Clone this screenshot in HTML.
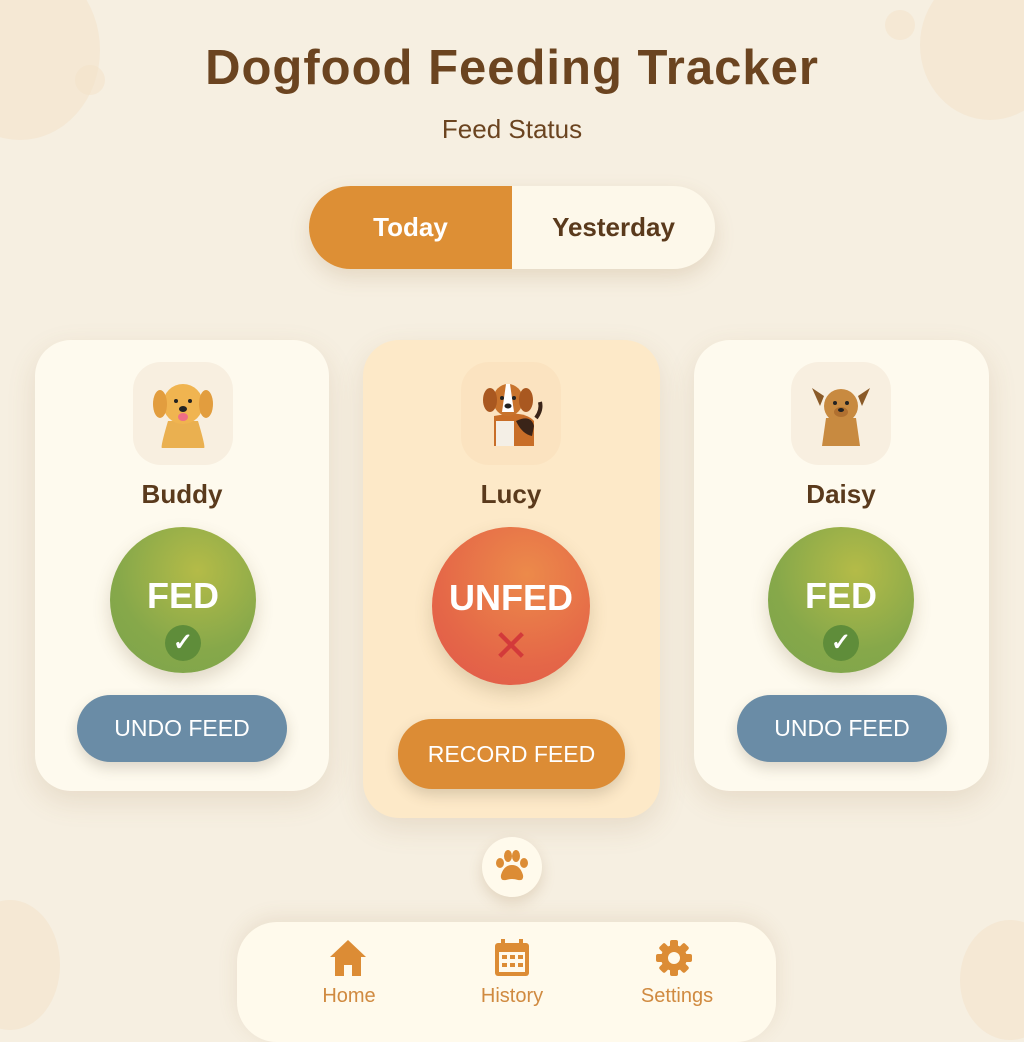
<!DOCTYPE html><html><head><style>
body{margin:0;width:1024px;height:1024px;overflow:hidden;background:#f6efe1;font-family:"Liberation Sans",sans-serif;position:relative}
.a{position:absolute}
.blob{position:absolute;border-radius:50%;background:#f3e2c8;opacity:.5}
h1{position:absolute;top:40px;left:0;width:1024px;text-align:center;margin:0;font-size:49px;font-weight:bold;color:#6b4420;letter-spacing:1px}
.sub{top:114px;left:0;width:1024px;text-align:center;font-size:26px;color:#6b4420}
.tog{left:309px;top:186px;width:406px;height:83px;border-radius:42px;overflow:hidden;background:#fdf8ea;box-shadow:0 8px 20px rgba(150,110,60,.18)}
.tog div{position:absolute;top:0;height:83px;line-height:83px;text-align:center;font-size:26px;font-weight:bold}
.card{border-radius:36px;background:#fefaee;box-shadow:0 10px 28px rgba(150,110,60,.15)}
.av{width:100px;height:103px;border-radius:28px;background:#f8efe0}
.name{font-size:26px;font-weight:bold;color:#5a3a1c;text-align:center;width:294px}
.circ{border-radius:50%;color:#fff;font-weight:bold;text-align:center;box-shadow:0 8px 18px rgba(100,80,40,.2)}
.btn{border-radius:34px;color:#fff;font-size:23px;text-align:center;box-shadow:0 6px 14px rgba(80,70,50,.2)}
.lab{font-size:20px;color:#d08a40;text-align:center;width:120px}
</style></head><body>
<div class="blob" style="left:-60px;top:-40px;width:160px;height:180px"></div>
<div class="blob" style="left:75px;top:65px;width:30px;height:30px"></div>
<div class="blob" style="left:920px;top:-30px;width:140px;height:150px"></div>
<div class="blob" style="left:885px;top:10px;width:30px;height:30px"></div>
<div class="blob" style="left:-40px;top:900px;width:100px;height:130px"></div>
<div class="blob" style="left:960px;top:920px;width:100px;height:120px"></div>
<h1>Dogfood Feeding Tracker</h1>
<div class="a sub">Feed Status</div>
<div class="a tog"><div style="left:0;width:203px;background:#dd8f35;color:#fff">Today</div><div style="left:203px;width:203px;color:#5a3a1c">Yesterday</div></div>

<div class="a card" style="left:35px;top:340px;width:294px;height:451px"></div>
<div class="a card" style="left:363px;top:340px;width:297px;height:478px;background:#fde9c8"></div>
<div class="a card" style="left:694px;top:340px;width:295px;height:451px"></div>

<div class="a av" style="left:133px;top:362px"></div>
<div class="a av" style="left:461px;top:362px;background:#fbe3c0"></div>
<div class="a av" style="left:791px;top:362px"></div>
<svg class="a" style="left:148px;top:376px" width="70" height="72" viewBox="0 0 70 72"><path d="M20 45 Q12 72 14 72 H56 Q58 72 50 45Z" fill="#eab050"/><ellipse cx="35" cy="28" rx="20" ry="20" fill="#f0b450"/><ellipse cx="12" cy="28" rx="7" ry="14" fill="#e29d3e"/><ellipse cx="58" cy="28" rx="7" ry="14" fill="#e29d3e"/><circle cx="28" cy="25" r="2" fill="#222"/><circle cx="42" cy="25" r="2" fill="#222"/><ellipse cx="35" cy="33" rx="4" ry="3" fill="#222"/><ellipse cx="35" cy="41" rx="5" ry="4" fill="#ef6f85"/></svg>
<svg class="a" style="left:476px;top:376px" width="72" height="72" viewBox="0 0 72 72"><path d="M18 40 L18 70 H58 L58 45 Q50 36 30 38Z" fill="#c86e28"/><path d="M40 45 Q55 38 58 50 L56 60 Q46 58 40 45Z" fill="#3a2418"/><path d="M20 45 L20 70 H38 L38 45Z" fill="#f4efe6"/><ellipse cx="32" cy="24" rx="15" ry="16" fill="#c8732c"/><ellipse cx="14" cy="24" rx="7" ry="12" fill="#a95820"/><ellipse cx="50" cy="24" rx="7" ry="12" fill="#a95820"/><path d="M30 8 L34 8 L38 36 L26 36Z" fill="#fff"/><circle cx="26" cy="22" r="2" fill="#222"/><circle cx="38" cy="22" r="2" fill="#222"/><ellipse cx="32" cy="30" rx="3.5" ry="2.5" fill="#222"/><path d="M60 42 Q66 34 64 26" stroke="#3a2418" stroke-width="4" fill="none"/></svg>
<svg class="a" style="left:806px;top:376px" width="70" height="72" viewBox="0 0 70 72"><path d="M20 42 L16 70 H54 L50 42Z" fill="#c88a40"/><ellipse cx="35" cy="30" rx="17" ry="17" fill="#c88a40"/><path d="M18 20 L6 12 L14 30Z" fill="#8a5a28"/><path d="M52 20 L64 12 L56 30Z" fill="#8a5a28"/><circle cx="29" cy="27" r="2" fill="#222"/><circle cx="41" cy="27" r="2" fill="#222"/><ellipse cx="35" cy="36" rx="7" ry="5" fill="#b07030"/><ellipse cx="35" cy="34" rx="3" ry="2" fill="#222"/></svg>

<div class="a name" style="left:35px;top:479px">Buddy</div>
<div class="a name" style="left:364px;top:479px">Lucy</div>
<div class="a name" style="left:694px;top:479px">Daisy</div>

<div class="a circ" style="left:110px;top:527px;width:146px;height:146px;background:radial-gradient(circle at 60% 30%,#b4bb48,#86a84a 60%,#7ca44c)"><div style="margin-top:48px;font-size:36px">FED</div><div style="margin:8px auto 0;width:36px;height:36px;border-radius:50%;background:#5f8d3a;line-height:36px;font-size:24px">✓</div></div>
<div class="a circ" style="left:768px;top:527px;width:146px;height:146px;background:radial-gradient(circle at 60% 30%,#b4bb48,#86a84a 60%,#7ca44c)"><div style="margin-top:48px;font-size:36px">FED</div><div style="margin:8px auto 0;width:36px;height:36px;border-radius:50%;background:#5f8d3a;line-height:36px;font-size:24px">✓</div></div>
<div class="a circ" style="left:432px;top:527px;width:158px;height:158px;background:radial-gradient(circle at 60% 30%,#ec8a4a,#e56848 60%,#e0564a)"><div style="margin-top:50px;font-size:36px">UNFED</div><div style="margin-top:2px;font-size:44px;color:#d33a3a;font-weight:normal">✕</div></div>

<div class="a btn" style="left:77px;top:695px;width:210px;height:67px;line-height:67px;background:#6a8ca6">UNDO FEED</div>
<div class="a btn" style="left:737px;top:695px;width:210px;height:67px;line-height:67px;background:#6a8ca6">UNDO FEED</div>
<div class="a btn" style="left:398px;top:719px;width:227px;height:70px;line-height:70px;background:#dc8c35">RECORD FEED</div>

<div class="a" style="left:482px;top:837px;width:60px;height:60px;border-radius:50%;background:#fffaec;box-shadow:0 6px 14px rgba(150,110,60,.2)"><svg width="60" height="60" viewBox="0 0 60 60" fill="#dc8c35"><ellipse cx="18" cy="26" rx="4" ry="5"/><ellipse cx="26" cy="19" rx="4" ry="6"/><ellipse cx="34" cy="19" rx="4" ry="6"/><ellipse cx="42" cy="26" rx="4" ry="5"/><path d="M30 28 Q22 28 19 38 Q18 44 24 43 Q30 41 36 43 Q42 44 41 38 Q38 28 30 28Z"/></svg></div>

<div class="a" style="left:237px;top:922px;width:539px;height:120px;border-radius:40px;background:#fffaec;box-shadow:0 -4px 20px rgba(150,110,60,.12)"></div>
<svg class="a" style="left:328px;top:938px" width="40" height="40" viewBox="0 0 40 40" fill="#dc8c35"><path d="M20 2 L38 19 H33 V38 H24 V27 H16 V38 H7 V19 H2Z"/></svg>
<svg class="a" style="left:492px;top:938px" width="40" height="40" viewBox="0 0 40 40"><rect x="3" y="5" width="34" height="33" rx="3" fill="#dc8c35"/><rect x="7" y="14" width="26" height="20" fill="#fffaec"/><rect x="9" y="1" width="4" height="7" fill="#dc8c35"/><rect x="27" y="1" width="4" height="7" fill="#dc8c35"/><g fill="#dc8c35"><rect x="10" y="17" width="5" height="4"/><rect x="18" y="17" width="5" height="4"/><rect x="26" y="17" width="5" height="4"/><rect x="10" y="25" width="5" height="4"/><rect x="18" y="25" width="5" height="4"/><rect x="26" y="25" width="5" height="4"/></g></svg>
<svg class="a" style="left:655px;top:939px" width="38" height="38" viewBox="0 0 38 38"><g fill="#dc8c35" transform="translate(19 19)"><circle r="13"/><rect x="-4" y="-18" width="8" height="36" rx="2"/><rect x="-4" y="-18" width="8" height="36" rx="2" transform="rotate(45)"/><rect x="-4" y="-18" width="8" height="36" rx="2" transform="rotate(90)"/><rect x="-4" y="-18" width="8" height="36" rx="2" transform="rotate(135)"/></g><circle cx="19" cy="19" r="6" fill="#fffaec"/></svg>
<div class="a lab" style="left:289px;top:985px">Home</div>
<div class="a lab" style="left:452px;top:985px">History</div>
<div class="a lab" style="left:617px;top:985px">Settings</div>
</body></html>
